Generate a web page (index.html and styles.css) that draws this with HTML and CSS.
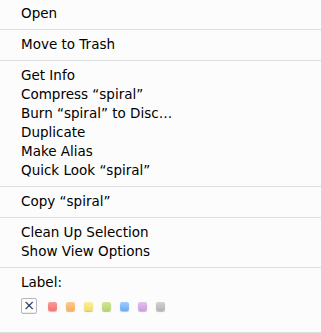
FILE: index.html
```html
<!DOCTYPE html>
<html lang="en">
<head>
    <meta charset="UTF-8">
    <title>Context menu</title>
    <link rel="stylesheet" href="styles.css">
</head>
<body>

<div class="menu">

    <!--first group-->
    <ul class="group">
        <li>Open</li>
    </ul>
    <div class="sep"></div>

    <ul class="group">
        <li>Move to Trash</li>
    </ul>
    <div class="sep"></div>

    <ul class="group">
        <li>Get Info</li>
        <li>Compress “spiral”</li>
        <li>Burn “spiral” to Disc…</li>
        <li>Duplicate</li>
        <li>Make Alias</li>
        <li>Quick Look “spiral”</li>
    </ul>
    <div class="sep"></div>

    <ul class="group">
        <li>Copy “spiral”</li>
    </ul>
    <div class="sep"></div>

    <ul class="group">
        <li>Clean Up Selection</li>
        <li>Show View Options</li>
    </ul>
    <div class="sep"></div>

    <!--label colours-->
    <div class="label">
        <div class="label-title">Label:</div>
        <div class="swatches">
            <span class="none">&times;</span>
            <span class="dot red"></span>
            <span class="dot orange"></span>
            <span class="dot yellow"></span>
            <span class="dot green"></span>
            <span class="dot blue"></span>
            <span class="dot purple"></span>
            <span class="dot gray"></span>
        </div>
    </div>
    <div class="sep last"></div>
</div>

</body>
</html>
```

FILE: styles.css
```css
* {
margin: 0;
padding: 0;
list-style: none;
box-sizing: border-box;
}

html,
body {
width: 321px;
height: 333px;
overflow: hidden;
background-color: #fcfcfc;
}

/*the whole menu*/
.menu {
width: 321px;
padding-top: 4px;
font-family: "DejaVu Sans", "Liberation Sans", sans-serif;
font-size: 13.5px;
color: #000;
}

.group li {
height: 19px;
line-height: 19px;
padding-left: 21px;
white-space: nowrap;
}

/*separator lines*/
.sep {
height: 1px;
margin: 6px 0 5px;
background-color: #dedede;
}

.sep.last {
margin-top: 8px;
}

.label {
padding-left: 21px;
height: 51px;
}

.label-title {
height: 19px;
line-height: 19px;
margin-top: 1px;
}

.swatches {
display: flex;
align-items: center;
height: 16px;
margin-top: 6px;
}

.none {
width: 16px;
height: 16px;
border: 1px solid #b8b8b8;
border-radius: 2px;
background-color: #fff;
box-shadow: inset 0 -1px 1px rgba(0, 0, 0, .08);
font-size: 14px;
line-height: 13px;
text-align: center;
color: #333;
margin-right: 11px;
}

.dot {
width: 9px;
height: 9px;
border-radius: 2px;
margin-right: 9px;
box-shadow: 0 1px 1px rgba(0, 0, 0, .25);
}

.red {
background: linear-gradient(#fb9a9a, #f37474);
}

.orange {
background: linear-gradient(#fdcb8c, #f9ad5e);
}

.yellow {
background: linear-gradient(#faf09a, #f2dd66);
}

.green {
background: linear-gradient(#d2e79a, #b5d36c);
}

.blue {
background: linear-gradient(#9fcdfc, #6eabf1);
}

.purple {
background: linear-gradient(#e3c0ee, #cc9ddc);
}

.gray {
background: linear-gradient(#d2d2d2, #b4b4b4);
}
```
